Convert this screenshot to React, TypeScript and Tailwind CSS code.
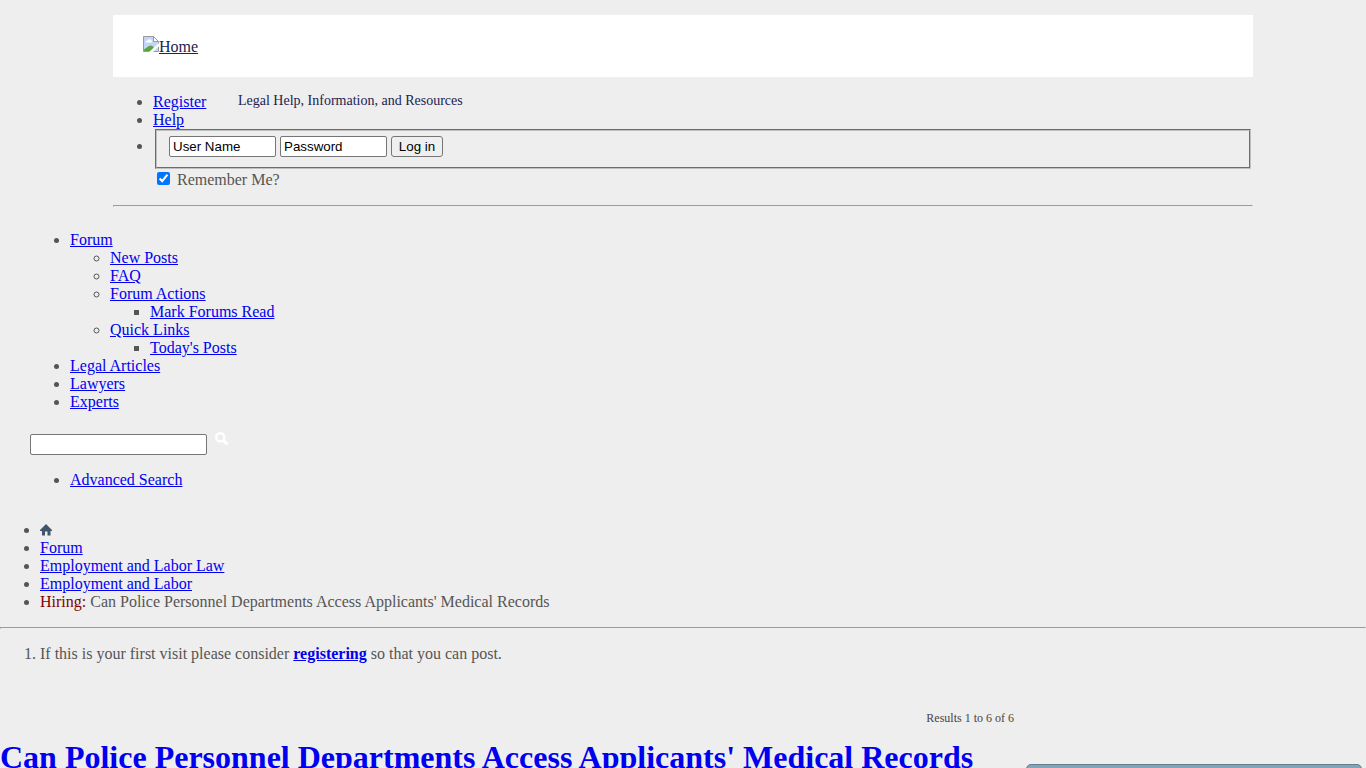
import type { ReactNode } from 'react';

function Link({ children }: { children: ReactNode }) {
  return (
    <a href="#" className="text-[#0000ee] underline">
      {children}
    </a>
  );
}

function Divider() {
  return (
    <hr className="mt-4 h-0.5 border border-t-[#9a9a9a] border-r-[#eeeeee] border-b-[#eeeeee] border-l-[#9a9a9a]" />
  );
}

function BrokenImage() {
  return (
    <svg width="16" height="16" viewBox="0 0 16 16" className="-mt-1 shrink-0">
      <path d="M0.5 0.5H10.5L15.5 5.5V15.5H0.5Z" fill="#c3d5f7" />
      <path d="M2.5 6.5a2 2 0 0 1 2-2 2.2 2.2 0 0 1 4 0 1.6 1.6 0 0 1 0 2Z" fill="#fff" />
      <path d="M1 15V13.5L6 10Q8 9 10 10.5L11 12V15Z" fill="#5aa53c" />
      <path d="M10.5 0.5V5.5H15.5Z" fill="#fff" />
      <path
        d="M15.5 9V5.5L10.5 0.5H0.5V15.5H15.5V11M10.5 0.5V5.5H15.5"
        fill="none"
        stroke="#9a9a9a"
      />
      <path d="M16 7V10L10 16H6L16 7Z" fill="#fff" />
    </svg>
  );
}

function SearchIcon() {
  return (
    <svg width="14" height="14" viewBox="0 0 14 14" className="-mt-0.5 ml-2">
      <circle cx="5.3" cy="5.3" r="4.1" fill="none" stroke="#fff" strokeWidth="2.4" />
      <path d="M8.3 8.3L12.5 12.5" stroke="#fff" strokeWidth="3" />
    </svg>
  );
}

function HomeIcon() {
  return (
    <svg width="12" height="12" viewBox="0 0 12 12">
      <path d="M6 0L12 6V7H10.5V11.5H7.5V7.5H5V11.5H2V7H0V6Z" fill="#3f566b" />
    </svg>
  );
}

function Header() {
  return (
    <header className="mx-[113px] pt-[15px]">
      <div className="flex h-[62px] items-center bg-white pl-[30px] text-[#22224f]">
        <BrokenImage />
        <a href="#" className="mt-[2px] underline">
          Home
        </a>
      </div>
      <div className="grid pt-4">
        <p className="col-start-1 row-start-1 h-4 pl-[125px] text-sm leading-4 text-[#22224f]">
          Legal Help, Information, and Resources
        </p>
        <ul className="col-start-1 row-start-1 list-disc pl-10">
          <li>
            <Link>Register</Link>
          </li>
          <li>
            <Link>Help</Link>
          </li>
          <li>
            <div className="mx-0.5 flex h-10 gap-1 border-2 border-[#c0c0c0] [border-style:groove] pt-[5px] pl-3 font-['Liberation_Sans',Arial,sans-serif] text-[13.333px] leading-[15px] text-black">
              <input
                className="h-[21px] w-[107px] rounded-[2px] border border-[#767676] bg-white px-[3px]"
                defaultValue="User Name"
              />
              <input
                className="h-[21px] w-[107px] rounded-[2px] border border-[#767676] bg-white px-[3px]"
                defaultValue="Password"
              />
              <button className="h-[21px] w-[52px] rounded-[3px] border border-[#767676] bg-[#efefef]">
                Log in
              </button>
            </div>
            <label className="mt-0.5 flex pl-1">
              <input type="checkbox" defaultChecked className="mt-px h-[13px] w-[13px]" />
              <span className="ml-[7px]">Remember Me?</span>
            </label>
          </li>
        </ul>
      </div>
      <Divider />
    </header>
  );
}

function Nav() {
  return (
    <nav className="pt-6 pl-[30px]">
      <ul className="list-disc pl-10">
        <li>
          <Link>Forum</Link>
          <ul className="list-[circle] pl-10">
            <li>
              <Link>New Posts</Link>
            </li>
            <li>
              <Link>FAQ</Link>
            </li>
            <li>
              <Link>Forum Actions</Link>
              <ul className="list-[square] pl-10">
                <li>
                  <Link>Mark Forums Read</Link>
                </li>
              </ul>
            </li>
            <li>
              <Link>Quick Links</Link>
              <ul className="list-[square] pl-10">
                <li>
                  <Link>Today's Posts</Link>
                </li>
              </ul>
            </li>
          </ul>
        </li>
        <li>
          <Link>Legal Articles</Link>
        </li>
        <li>
          <Link>Lawyers</Link>
        </li>
        <li>
          <Link>Experts</Link>
        </li>
      </ul>
      <div className="mt-[23px] flex">
        <input className="h-[21px] w-[177px] rounded-[2px] border border-[#767676] bg-white" />
        <SearchIcon />
      </div>
      <ul className="mt-4 list-disc pl-10">
        <li>
          <Link>Advanced Search</Link>
        </li>
      </ul>
    </nav>
  );
}

function Breadcrumb() {
  return (
    <ul className="mt-8 list-disc pl-10">
      <li className="h-[18px]">
        <a href="#" className="-mb-px inline-block align-baseline">
          <HomeIcon />
        </a>
      </li>
      <li>
        <Link>Forum</Link>
      </li>
      <li>
        <Link>Employment and Labor Law</Link>
      </li>
      <li>
        <Link>Employment and Labor</Link>
      </li>
      <li>
        <span className="text-[#800000]">Hiring:</span> Can Police Personnel Departments Access
        Applicants' Medical Records
      </li>
    </ul>
  );
}

function App() {
  return (
    <div className="h-screen overflow-hidden bg-[#eeeeee] font-['Liberation_Serif','Times_New_Roman',serif] text-base leading-[18px] text-[#555555]">
      <Header />
      <Nav />
      <Breadcrumb />
      <Divider />
      <ol className="mt-4 list-decimal pl-10">
        <li>
          If this is your first visit please consider{' '}
          <b>
            <Link>registering</Link>
          </b>{' '}
          so that you can post.
        </li>
      </ol>
      <div className="mt-[47px] flex justify-between">
        <main className="w-[1014px]">
          <p className="text-right text-xs leading-4 text-[#444444]">Results 1 to 6 of 6</p>
          <h1 className="mt-[13px] text-[32px] leading-9 font-bold whitespace-nowrap text-[#0000ee]">
            Can Police Personnel Departments Access Applicants' Medical Records
          </h1>
        </main>
        <aside className="mt-[54px] mr-1 h-10 w-[336px] rounded-t-[5px] border border-[#5f7f95] bg-[#87a3b3]" />
      </div>
    </div>
  );
}

export default App;
